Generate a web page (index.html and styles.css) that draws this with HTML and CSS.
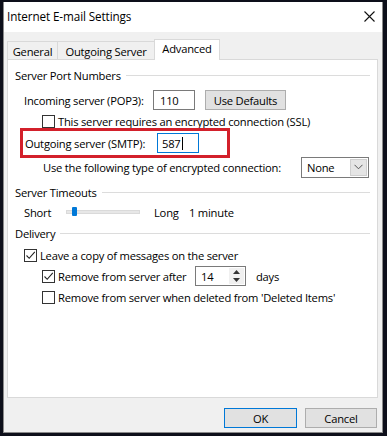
FILE: index.html
```html
<!DOCTYPE html>
<html>
<head>
<meta charset="utf-8">
<link rel="stylesheet" href="styles.css">
</head>
<body>
<div class="window">
  <div class="titlebar">
    <span class="title">Internet E-mail Settings</span>
    <svg class="close" width="11" height="11" viewBox="0 0 11 11"><path d="M0.5 0.5L10.5 10.5M10.5 0.5L0.5 10.5" stroke="#111" stroke-width="1.1" fill="none"/></svg>
  </div>
  <div class="body">
    <div class="tabs">
      <div class="tab t-general">General</div>
      <div class="tab t-outgoing">Outgoing Server</div>
      <div class="tab t-advanced active">Advanced</div>
    </div>
    <div class="panel">
      <div class="group-head gh-first"><span>Server Port Numbers</span><i class="rule"></i></div>
      <div class="row r-incoming">
        <span class="lbl w-incoming">Incoming server (POP3):</span>
        <div class="textbox">110</div>
        <div class="btn btn-defaults">Use Defaults</div>
      </div>
      <div class="row r-ssl">
        <span class="cb"></span><span class="cb-text">This server requires an encrypted connection (SSL)</span>
      </div>
      <div class="redbox">
        <span class="lbl w-outgoing">Outgoing server (SMTP):</span>
        <div class="textbox focus">587<i class="caret"></i></div>
      </div>
      <div class="row r-enc">
        <span class="lbl">Use the following type of encrypted connection:</span>
        <div class="select"><span>None</span><span class="sel-arrow"><svg width="9" height="6" viewBox="0 0 9 6"><path d="M0.5 0.8L4.5 4.8L8.5 0.8" stroke="#555" fill="none"/></svg></span></div>
      </div>
      <div class="group-head gh-timeouts"><span>Server Timeouts</span><i class="rule"></i></div>
      <div class="row r-slider">
        <span class="lbl w-short">Short</span>
        <div class="track"><i class="thumb"></i></div>
        <span class="lbl w-long">Long</span>
        <span class="lbl">1 minute</span>
      </div>
      <div class="group-head gh-delivery"><span>Delivery</span><i class="rule"></i></div>
      <div class="row r-leave">
        <span class="cb checked"><svg width="11" height="11" viewBox="0 0 11 11"><path d="M1.5 5.5L4.2 8.3L9.8 1.8" stroke="#222" stroke-width="1.1" fill="none"/></svg></span><span class="cb-text">Leave a copy of messages on the server</span>
      </div>
      <div class="row r-after">
        <span class="cb checked"><svg width="11" height="11" viewBox="0 0 11 11"><path d="M1.5 5.5L4.2 8.3L9.8 1.8" stroke="#222" stroke-width="1.1" fill="none"/></svg></span><span class="cb-text w-after">Remove from server after</span>
        <div class="spinner"><span class="spin-val">14</span><span class="spin-btns"><svg width="7" height="4" viewBox="0 0 7 4"><path d="M0 4L3.5 0L7 4Z" fill="#333"/></svg><svg width="7" height="4" viewBox="0 0 7 4"><path d="M0 0L3.5 4L7 0Z" fill="#333"/></svg></span></div>
        <span class="lbl days">days</span>
      </div>
      <div class="row r-deleted">
        <span class="cb"></span><span class="cb-text">Remove from server when deleted from 'Deleted Items'</span>
      </div>
    </div>
    <div class="footer">
      <div class="btn btn-ok">OK</div>
      <div class="btn btn-cancel">Cancel</div>
    </div>
  </div>
</div>
</body>
</html>
```
FILE: styles.css
```css
* { box-sizing: border-box; }
html, body { margin: 0; padding: 0; }
body {
  width: 387px;
  height: 436px;
  overflow: hidden;
  background: #0d0f1a;
  font-family: "Open Sans", "Noto Sans", sans-serif;
  font-size: 11.2px;
  letter-spacing: -0.22px;
  color: #000;
}
.window {
  margin: 2px 0 0 3px;
  width: 380px;
  height: 431px;
  background: #f0f0f0;
  border-left: 1px solid #8a8a8a;
  border-right: 1px solid #8a8a8a;
  border-bottom: 1px solid #8a8a8a;
  display: flex;
  flex-direction: column;
}
.titlebar {
  height: 30px;
  background: #fff;
  display: flex;
  align-items: center;
  padding-left: 3px;
  padding-right: 7px;
}
.title {
  font-size: 11.7px;
  letter-spacing: -0.1px;
  flex: 1;
  padding-bottom: 2px;
}
.close { margin-right: 0; margin-top: -1px; }
.body {
  padding: 0 0 0 3px;
  display: flex;
  flex-direction: column;
}
.tabs {
  display: flex;
  align-items: flex-end;
  height: 27px;
  padding-top: 7px;
  position: relative;
  z-index: 1;
}
.tab {
  height: 18px;
  border: 1px solid #d9d9d9;
  border-bottom: none;
  background: #f0f0f0;
  display: flex;
  align-items: center;
  justify-content: center;
  padding-top: 1px;
}
.t-general { width: 51px; }
.t-outgoing { width: 97px; border-left: none; }
.t-advanced { width: 66px; margin-left: -1px; }
.tab.active {
  height: 21px;
  background: #fff;
  margin-bottom: -1px;
  padding-top: 0;
  padding-bottom: 3px;
}
.panel {
  width: 371px;
  height: 339px;
  background: #fff;
  border: 1px solid #d9d9d9;
  display: flex;
  flex-direction: column;
}
.group-head {
  height: 18px;
  display: flex;
  align-items: center;
  padding-left: 7px;
  padding-right: 7px;
}
.group-head .rule {
  flex: 1;
  height: 1px;
  background: #dcdcdc;
  margin-left: 5px;
}
.gh-first { margin-top: 6px; }
.gh-timeouts { margin-top: 6px; }
.gh-delivery { margin-top: 4px; }
.row {
  display: flex;
  align-items: center;
}
.r-incoming { margin-top: 6px; height: 20px; padding-left: 16px; }
.w-incoming { width: 129px; }
.textbox {
  width: 42px;
  height: 20px;
  border: 1px solid #7a7a7a;
  background: #fff;
  padding-left: 6px;
  display: flex;
  align-items: center;
}
.textbox.focus { border-color: #0078d7; padding-left: 4px; }
.caret {
  display: inline-block;
  width: 1px;
  height: 13px;
  background: #000;
  margin-left: 1px;
}
.btn {
  height: 20px;
  background: #e1e1e1;
  border: 1px solid #adadad;
  display: flex;
  align-items: center;
  justify-content: center;
}
.btn-defaults { width: 81px; margin-left: 10px; }
.r-ssl { margin-top: 4px; height: 14px; padding-left: 34px; }
.cb {
  width: 13px;
  height: 13px;
  border: 1px solid #333;
  background: #fff;
  flex: none;
  display: flex;
  align-items: center;
  justify-content: center;
}
.cb-text { margin-left: 3px; }
.redbox {
  margin-left: 12px;
  width: 210px;
  height: 30px;
  border: 3px solid #d3202b;
  display: flex;
  align-items: center;
  padding-left: 2px;
}
.w-outgoing { width: 132px; }
.r-enc { margin-top: -1px; height: 20px; padding-left: 35px; padding-right: 8px; }
.r-enc .lbl { flex: 1; }
.select {
  width: 68px;
  height: 21px;
  border: 1px solid #7a7a7a;
  background: #fff;
  display: flex;
  align-items: center;
  justify-content: space-between;
  padding-left: 5px;
  padding-right: 1px;
}
.sel-arrow {
  width: 17px;
  height: 17px;
  background: #e5e5e5;
  border: 1px solid #cfcfcf;
  display: flex;
  align-items: center;
  justify-content: center;
}
.r-slider { margin-top: 3px; height: 16px; padding-left: 16px; }
.w-short { width: 42px; }
.track {
  width: 74px;
  height: 4px;
  background: #e7e7e7;
  border: 1px solid #dadada;
  position: relative;
}
.thumb {
  position: absolute;
  left: 5px;
  top: -4px;
  width: 5px;
  height: 9px;
  background: #0078d7;
  border-radius: 1px;
}
.w-long { width: 35px; margin-left: 14px; }
.r-leave { margin-top: 6px; height: 14px; padding-left: 16px; }
.r-after { margin-top: 4px; height: 20px; padding-left: 34px; }
.w-after { width: 137px; }
.spinner {
  width: 51px;
  height: 20px;
  border: 1px solid #7a7a7a;
  background: #fff;
  display: flex;
  align-items: stretch;
}
.spin-val { flex: 1; padding-left: 5px; display: flex; align-items: center; }
.spin-btns {
  width: 15px;
  margin: 1px;
  display: flex;
  flex-direction: column;
  justify-content: space-around;
  align-items: center;
  background: #f0f0f0;
}
.days { margin-left: 10px; }
.r-deleted { margin-top: 4px; height: 14px; padding-left: 34px; }
.footer {
  display: flex;
  margin-top: 10px;
  padding-left: 217px;
  gap: 8px;
}
.btn-ok { width: 73px; border: 1px solid #0078d7; }
.btn-cancel { width: 72px; }
```
